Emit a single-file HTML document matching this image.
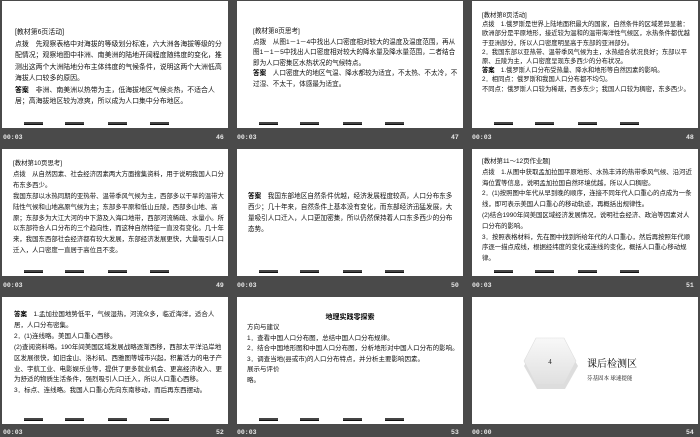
<!DOCTYPE html>
<html><head><meta charset="utf-8"><style>
*{margin:0;padding:0;box-sizing:border-box}
body{width:700px;height:437px;background:#4a4a4a;position:relative;overflow:hidden;font-family:"Liberation Sans","Noto Sans CJK SC",sans-serif}
.s{position:absolute;width:226px;height:127px;background:#fff}
.t{position:absolute;color:#111;white-space:normal;word-break:break-all}
.t b{font-weight:bold;color:#000}
.f{position:absolute;color:#e8e8e8;font:bold 6.5px "Liberation Mono",monospace}
.lk{position:absolute;bottom:3px;left:0;width:100%;height:3px}
.lk i{position:absolute;top:0;width:19px;height:3px;background:#444;border-bottom:1px solid #111}
</style></head><body>

<!-- Row 1 -->
<div class="s" style="left:2px;top:1px">
<div class="t" style="left:13px;top:26px;width:208px;font-size:6.9px;line-height:11.5px">[教材第6页活动]<br>点拨　先观察表格中对海拔的等级划分标准，六大洲各海拔等级的分配情况；观察地图中非洲、南美洲的陆地开阔程度随纬度的变化，推测出这两个大洲陆地分布主体纬度的气候条件，说明这两个大洲低高海拔人口较多的原因。<br><b>答案</b>　非洲、南美洲以热带为主，低海拔地区气候炎热，不适合人居；高海拔地区较为凉爽，所以成为人口集中分布地区。</div>
<div class="lk"><i style="left:22px"></i><i style="left:63px"></i><i style="left:106px"></i><i style="left:148px"></i></div></div>
<div class="f" style="left:3px;top:134px">00:03</div><div class="f" style="left:216px;top:134px">46</div>

<div class="s" style="left:237px;top:1px">
<div class="t" style="left:16px;top:26px;width:206px;font-size:6.6px;line-height:10.6px">[教材第8页思考]<br>点拨　从图1－1－4中找出人口密度相对较大的温度及温度范围，再从图1－1－5中找出人口密度相对较大的降水量及降水量范围，二者结合即为人口密集区水热状况的气候特点。<br><b>答案</b>　人口密度大的地区气温、降水都较为适宜，不太热、不太冷，不过湿、不太干，体感最为适宜。</div>
<div class="lk"><i style="left:22px"></i><i style="left:63px"></i><i style="left:106px"></i><i style="left:148px"></i></div></div>
<div class="f" style="left:237px;top:134px">00:03</div><div class="f" style="left:451px;top:134px">47</div>

<div class="s" style="left:472px;top:1px">
<div class="t" style="left:10px;top:10px;width:212px;font-size:6.3px;line-height:9.2px">[教材第8页活动]<br>点拨　1.俄罗斯是世界上陆地面积最大的国家，自然条件的区域差异显著：欧洲部分是平原地形，接近较为温和的温带海洋性气候区，水热条件都优越于亚洲部分，所以人口密度明显高于东部的亚洲部分。<br>2．我国东部以亚热带、温带季风气候为主，水热组合状况良好；东部以平原、丘陵为主，人口密度呈现东多西少的分布状况。<br><b>答案</b>　1.俄罗斯人口分布受热量、降水和地形等自然因素的影响。<br>2．相同点：俄罗斯和我国人口分布都不均匀。<br>不同点：俄罗斯人口较为稀疏，西多东少；我国人口较为稠密，东多西少。</div>
<div class="lk"><i style="left:22px"></i><i style="left:63px"></i><i style="left:106px"></i><i style="left:148px"></i></div></div>
<div class="f" style="left:472px;top:134px">00:03</div><div class="f" style="left:686px;top:134px">48</div>

<!-- Row 2 -->
<div class="s" style="left:2px;top:149px">
<div class="t" style="left:11px;top:10px;width:212px;font-size:6.4px;line-height:10.9px">[教材第10页思考]<br>点拨　从自然因素、社会经济因素两大方面搜集资料，用于说明我国人口分布东多西少。<br>我国东部以水热同期的亚热带、温带季风气候为主，西部多以干旱的温带大陆性气候和山地高原气候为主；东部多平原和低山丘陵，西部多山地、高原；东部多为大江大河的中下游及入海口地带，西部河流稀疏、水量小。所以东部符合人口分布的三个趋向性，而这种自然特征一直没有变化。几十年来，我国东西部社会经济都有较大发展，东部经济发展更快，大量吸引人口迁入，人口密度一直居于高位且不变。</div>
<div class="lk"><i style="left:22px"></i><i style="left:63px"></i><i style="left:106px"></i><i style="left:148px"></i></div></div>
<div class="f" style="left:3px;top:282px">00:03</div><div class="f" style="left:216px;top:282px">49</div>

<div class="s" style="left:237px;top:149px">
<div class="t" style="left:11px;top:42px;width:210px;font-size:6.6px;line-height:11px"><b>答案</b>　我国东部地区自然条件优越，经济发展程度较高，人口分布东多西少；几十年来，自然条件上基本没有变化，而东部经济迅猛发展，大量吸引人口迁入，人口更加密集，所以仍然保持着人口东多西少的分布态势。</div>
<div class="lk"><i style="left:22px"></i><i style="left:63px"></i><i style="left:106px"></i><i style="left:148px"></i></div></div>
<div class="f" style="left:237px;top:282px">00:03</div><div class="f" style="left:451px;top:282px">50</div>

<div class="s" style="left:472px;top:149px">
<div class="t" style="left:10px;top:8px;width:212px;font-size:6.4px;line-height:10.8px">[教材第11～12页作业题]<br>点拨　1.从图中获取孟加拉国平原地形、水热丰沛的热带季风气候、沿河近海位置等信息，说明孟加拉国自然环境优越，所以人口稠密。<br>2．(1)按照图中年代从早到晚的顺序，连接不同年代人口重心的点成为一条线，即可表示美国人口重心的移动轨迹，再概括出规律性。<br>(2)结合1990年间美国区域经济发展情况，说明社会经济、政治等因素对人口分布的影响。<br>3．按照表格材料，先在图中找到所给年代的人口重心，然后再按照年代顺序逐一描点成线，根据经纬度的变化或连线的变化，概括人口重心移动规律。</div>
<div class="lk"><i style="left:22px"></i><i style="left:63px"></i><i style="left:106px"></i><i style="left:148px"></i></div></div>
<div class="f" style="left:472px;top:282px">00:03</div><div class="f" style="left:686px;top:282px">51</div>

<!-- Row 3 -->
<div class="s" style="left:2px;top:297px">
<div class="t" style="left:12px;top:13px;width:212px;font-size:6.5px;line-height:10.9px"><b>答案</b>　1.孟加拉国地势低平，气候湿热，河流众多，临近海洋，适合人居，人口分布密集。<br>2．(1)连线略。美国人口重心西移。<br>(2)查阅资料略。190年间美国区域发展战略逐渐西移，西部太平洋沿岸地区发展很快，如旧金山、洛杉矶、西雅图等城市兴起，积蓄活力的电子产业、宇航工业、电影娱乐业等，提供了更多就业机会、更高经济收入、更为舒适的物质生活条件，强烈吸引人口迁入，所以人口重心西移。<br>3．标点、连线略。我国人口重心先向东南移动，而后再东西摆动。</div>
<div class="lk"><i style="left:22px"></i><i style="left:63px"></i><i style="left:106px"></i><i style="left:148px"></i></div></div>
<div class="f" style="left:3px;top:429px">00:03</div><div class="f" style="left:216px;top:429px">52</div>

<div class="s" style="left:237px;top:297px">
<div class="t" style="left:0;top:15px;width:226px;text-align:center;font-size:7px;font-weight:bold;color:#000">地理实践零探索</div>
<div class="t" style="left:10px;top:26px;width:214px;font-size:6.5px;line-height:10.6px">方向与建议<br>1．查看中国人口分布图，总结中国人口分布规律。<br>2．结合中国地形图和中国人口分布图，分析地形对中国人口分布的影响。<br>3．调查当地(县或市)的人口分布特点，并分析主要影响因素。<br>展示与评价<br>略。</div>
<div class="lk"><i style="left:22px"></i><i style="left:63px"></i><i style="left:106px"></i><i style="left:148px"></i></div></div>
<div class="f" style="left:237px;top:429px">00:03</div><div class="f" style="left:451px;top:429px">53</div>

<div class="s" style="left:472px;top:297px">
<svg style="position:absolute;left:47px;top:36px" width="62" height="62" viewBox="0 0 62 62">
<defs><linearGradient id="g" x1="0" y1="0" x2="0" y2="1"><stop offset="0" stop-color="#f8f8f8"/><stop offset="1" stop-color="#e0e0e0"/></linearGradient></defs>
<polygon points="17,8 45,8 58,30 45,53 17,53 4,30" fill="#bbb" opacity=".5" transform="translate(1,3)"/>
<polygon points="17,5 45,5 57,28 45,51 17,51 5,28" fill="url(#g)" stroke="#ddd" stroke-width=".6"/>
<text x="31" y="31" font-size="7" text-anchor="middle" font-family="Liberation Serif,serif" fill="#222">4</text>
</svg>
<div class="t" style="left:115px;top:58px;font-size:10px;color:#000;font-family:'Liberation Serif','Noto Serif CJK SC',serif;white-space:nowrap">课后检测区</div>
<div class="t" style="left:115px;top:77px;font-size:5.5px;color:#000;font-family:'Liberation Serif','Noto Serif CJK SC',serif;white-space:nowrap">芬基固本 球速提能</div>
</div>
<div class="f" style="left:472px;top:429px">00:00</div><div class="f" style="left:686px;top:429px">54</div>

</body></html>
